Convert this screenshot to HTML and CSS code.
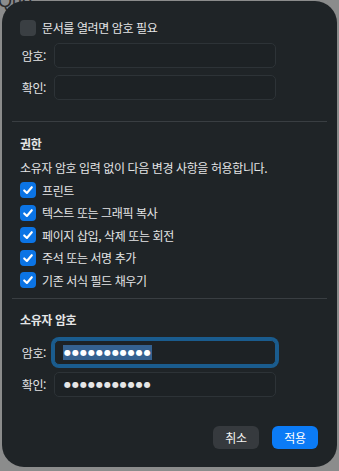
FILE: index.html
```html
<!DOCTYPE html>
<html lang="ko">
<head>
    <meta charset="UTF-8">
    <title>암호</title>
    <link rel="stylesheet" href="styles.css">
</head>
<body>
    <div class="behind">Quo</div>

    <div class="sheet">
        <div class="check-row">
            <span class="box"></span>
            <span>문서를 열려면 암호 필요</span>
        </div>
        <div class="field first">
            <label>암호:</label>
            <div class="input"></div>
        </div>
        <div class="field">
            <label>확인:</label>
            <div class="input"></div>
        </div>

        <div class="divider top-divider"></div>

        <h2 class="heading perm-heading">권한</h2>
        <p class="desc">소유자 암호 입력 없이 다음 변경 사항을 허용합니다.</p>
        <ul class="perms">
            <li><span class="box on"><svg viewBox="0 0 16 16"><path d="M4.2 8.4 L6.9 11 L11.8 5.2" /></svg></span>프린트</li>
            <li><span class="box on"><svg viewBox="0 0 16 16"><path d="M4.2 8.4 L6.9 11 L11.8 5.2" /></svg></span>텍스트 또는 그래픽 복사</li>
            <li><span class="box on"><svg viewBox="0 0 16 16"><path d="M4.2 8.4 L6.9 11 L11.8 5.2" /></svg></span>페이지 삽입, 삭제 또는 회전</li>
            <li><span class="box on"><svg viewBox="0 0 16 16"><path d="M4.2 8.4 L6.9 11 L11.8 5.2" /></svg></span>주석 또는 서명 추가</li>
            <li><span class="box on"><svg viewBox="0 0 16 16"><path d="M4.2 8.4 L6.9 11 L11.8 5.2" /></svg></span>기존 서식 필드 채우기</li>
        </ul>

        <div class="divider"></div>

        <h2 class="heading owner-heading">소유자 암호</h2>
        <div class="field owner-first">
            <label>암호:</label>
            <div class="input focused"><span class="dots selected">●●●●●●●●●●●</span></div>
        </div>
        <div class="field">
            <label>확인:</label>
            <div class="input"><span class="dots">●●●●●●●●●●●</span></div>
        </div>

        <div class="buttons">
            <button type="button" class="btn cancel">취소</button>
            <button type="button" class="btn apply">적용</button>
        </div>
    </div>
</body>
</html>
```

FILE: styles.css
```css
* {
    box-sizing: border-box;
}
html, body {
    width: 339px;
    height: 471px;
    overflow: hidden;
}
body {
    margin: 0;
    position: relative;
    background: #8b8c8c;
    font-family: "Noto Sans CJK KR", "Noto Sans", sans-serif;
    font-size: 12px;
    letter-spacing: -0.4px;
    color: #e4e5e6;
}
.behind {
    position: absolute;
    left: -2px;
    top: -9px;
    font-family: "Liberation Sans", sans-serif;
    font-size: 18px;
    line-height: 20px;
    color: #2a2a2a;
    letter-spacing: 0;
}
.sheet {
    position: relative;
    margin: 1px 2px 0 2px;
    width: 335px;
    height: 466px;
    background: #1f2427;
    border-radius: 22px;
    padding: 19px 10px 0 10px;
    display: flex;
    flex-direction: column;
}

.check-row {
    display: flex;
    align-items: center;
    gap: 6px;
    height: 16px;
    padding-left: 8px;
    line-height: 16px;
}
.box {
    width: 16px;
    height: 16px;
    flex: none;
    border-radius: 4px;
    background: #3a3f43;
    display: flex;
    align-items: center;
    justify-content: center;
}
.box.on {
    background: #0b74e5;
}
.box svg {
    width: 16px;
    height: 16px;
    fill: none;
    stroke: #ffffff;
    stroke-width: 2.1;
    stroke-linecap: round;
    stroke-linejoin: round;
}

.field {
    display: flex;
    align-items: center;
    margin-top: 7px;
    height: 25px;
}
.field label {
    width: 34px;
    text-align: right;
    margin-right: 8px;
    flex: none;
}
.input {
    width: 222px;
    height: 25px;
    border: 1px solid #2d3337;
    border-radius: 5px;
    background: #1d2225;
    display: flex;
    align-items: center;
    padding-left: 8px;
}
.input.focused {
    box-shadow: 0 0 0 3px #1a5c8e;
    border-color: #1a5c8e;
}
.dots {
    font-family: "DejaVu Sans", sans-serif;
    font-size: 8px;
    letter-spacing: 1px;
    line-height: 15px;
    color: #e6e6e6;
    padding-left: 1px;
}
.dots.selected {
    background: #35618f;
    color: #ffffff;
}

.divider {
    height: 1px;
    background: #393e42;
    margin-top: 6px;
}
.top-divider {
    margin-top: 21px;
}

.heading {
    margin: 14px 0 0 8px;
    font-size: 12px;
    font-weight: 700;
    line-height: 16px;
}
.owner-heading {
    margin-top: 13px;
}
.desc {
    margin: 8px 0 0 8px;
    line-height: 16px;
}
.perms {
    list-style: none;
    margin: 3px 0 0 0;
    padding: 0 0 0 8px;
}
.perms li {
    display: flex;
    align-items: center;
    gap: 6px;
    height: 22.5px;
}
.owner-first {
    margin-top: 12px;
}

.buttons {
    display: flex;
    justify-content: flex-end;
    gap: 13px;
    margin-top: 29px;
    padding-right: 9px;
}
.btn {
    width: 46px;
    height: 23px;
    border: none;
    border-radius: 6px;
    font-family: inherit;
    font-size: 12px;
    letter-spacing: -0.4px;
    color: #f2f2f2;
    padding: 0;
}
.cancel {
    background: #363a3e;
}
.apply {
    background: #0b7bf6;
    color: #ffffff;
}
```
